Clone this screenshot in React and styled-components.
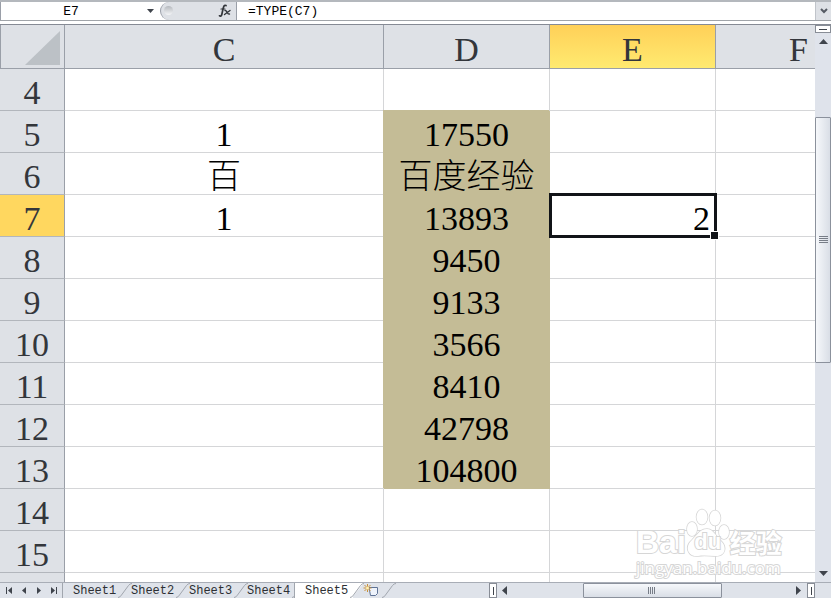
import React from "react";
import styled, { createGlobalStyle, css } from "styled-components";

const line = "#9a9fa8";
const gridLine = "#d5d6d8";
const chrome = "#dee1e6";
const khaki = "#c4bc96";
const cellFont = '"Liberation Serif", "Noto Sans CJK SC", serif';
const uiFont = '"Liberation Mono", "Noto Sans CJK SC", monospace';

const GlobalStyle = createGlobalStyle`
  * { box-sizing: border-box; }
  body { margin: 0; background: #fff; }
  button, input { font: inherit; color: inherit; margin: 0; padding: 0; border: 0; border-radius: 0; background: none; }
  svg { display: block; flex: none; }
`;

const Window = styled.main`
  display: flex;
  flex-direction: column;
  height: 100vh;
  overflow: hidden;
  font-family: ${uiFont};
`;

const FormulaBar = styled.header`
  display: flex;
  flex: none;
  height: 21px;
  border-top: 2px solid #b4b8bd;
  border-bottom: 1px solid #a0a4a9;
  background: #fff;
  font-size: 13px;
`;

const NameBox = styled.div`
  display: flex;
  width: 160px;
  border-left: 1px solid ${line};
`;

const NameInput = styled.input`
  width: 140px;
  min-width: 0;
  text-align: center;
`;

const IconButton = styled.button`
  display: flex;
  flex: none;
  align-items: center;
  justify-content: center;
  width: ${(p) => p.$width}px;
`;

const FunctionArea = styled.div`
  display: flex;
  justify-content: space-between;
  width: 77px;
  border-left: 1px solid ${line};
  border-right: 1px solid ${line};
  border-radius: 9px 0 0 9px;
  background: ${chrome};
`;

const Knob = styled.span`
  width: 9px;
  height: 9px;
  margin: 4px 0 0 3px;
  border-radius: 50%;
  background: linear-gradient(#b5b9be, #f4f5f7);
`;

const FormulaInput = styled.input`
  flex: 1;
  min-width: 0;
  padding-left: 11px;
`;

const ExpandButton = styled(IconButton)`
  border-left: 1px solid #c0c4ca;
  background: ${chrome};
`;

const Body = styled.div`
  display: flex;
  flex: 1;
  min-height: 0;
  margin-top: 3px;
  border-top: 1px solid #858a94;
`;

const SheetArea = styled.section`
  position: relative;
  flex: 1;
  min-width: 0;
  overflow: hidden;
`;

const Grid = styled.table`
  width: 100%;
  min-width: 882px;
  table-layout: fixed;
  border-collapse: separate;
  border-spacing: 0;
  font: 34px/34px ${cellFont};
`;

const Column = styled.col`
  width: ${(p) => (p.$width ? `${p.$width}px` : "auto")};
`;

const ColumnHeader = styled.th`
  height: 44px;
  padding: 6px 0 0;
  border-right: 1px solid ${line};
  border-bottom: 1px solid ${line};
  background: ${(p) => (p.$active ? "linear-gradient(#ffd058, #ffea70)" : chrome)};
  color: #33363b;
  font-weight: 400;
`;

const Corner = styled(ColumnHeader)`
  padding: 0 4px 3px 0;
  border-left: 1px solid ${line};
  vertical-align: bottom;
`;

const CornerButton = styled.button`
  display: block;
  margin-left: auto;
`;

const RowHeader = styled.th`
  height: 42px;
  padding: 7px 0 0;
  border-right: 1px solid ${line};
  border-bottom: 1px solid #b2b6bc;
  background: ${(p) => (p.$active ? "#ffd75f" : chrome)};
  color: #33363b;
  font-weight: 400;
`;

const Cell = styled.td`
  position: relative;
  height: 42px;
  padding: 7px 5px 0;
  border-right: 1px solid ${gridLine};
  border-bottom: 1px solid ${gridLine};
  color: #000;
  font-weight: 300;
  text-align: ${(p) => p.$align || "center"};
  white-space: nowrap;
  ${(p) =>
    p.$filled &&
    css`
      border-color: ${khaki};
      background: ${khaki};
      box-shadow: -1px -1px 0 ${khaki};
    `}
`;

const Selection = styled.span`
  position: absolute;
  inset: -2px -2px -2px -1px;
  z-index: 1;
  border: 3px solid #111418;
  pointer-events: none;

  &::after {
    content: "";
    position: absolute;
    right: -5px;
    bottom: -5px;
    width: 7px;
    height: 7px;
    border: 1px solid #fff;
    background: #111418;
  }
`;

const Watermark = styled.div`
  position: absolute;
  right: 29px;
  bottom: 5px;
  z-index: 2;
  width: 150px;
  color: #fff;
  font-family: "Open Sans", "Noto Sans CJK SC", sans-serif;
  white-space: nowrap;
  -webkit-text-stroke: 2px #d6d6d6;
  paint-order: stroke fill;
  pointer-events: none;
`;

const WatermarkBrand = styled.div`
  display: flex;
  align-items: flex-end;
  height: 51px;
  font: 700 32px/34px "Liberation Sans", sans-serif;
`;

const WatermarkPaw = styled.div`
  position: relative;
  width: 44px;
  height: 51px;
`;

const PawText = styled.span`
  position: absolute;
  inset: 20px 0 0;
  font-size: 22px;
  line-height: 28px;
  text-align: center;
`;

const WatermarkName = styled.span`
  font-family: "Noto Sans CJK SC", sans-serif;
  font-size: 26px;
`;

const WatermarkUrl = styled.div`
  font-size: 17px;
  line-height: 18px;
`;

const VerticalScroll = styled.aside`
  display: flex;
  flex: none;
  flex-direction: column;
  width: 16px;
  background: #dfe3eb;
`;

const SplitHandle = styled.button`
  display: flex;
  align-items: center;
  justify-content: center;
  flex: none;
  width: ${(p) => (p.$vertical ? 8 : 16)}px;
  height: ${(p) => (p.$vertical ? 15 : 8)}px;
  border: 1px solid #888d96;
  background: #fff;
`;

const Track = styled.div`
  display: flex;
  flex: 1;
  min-width: 0;
  min-height: 0;
  flex-direction: ${(p) => (p.$vertical ? "column" : "row")};
`;

const Spacer = styled.div`
  flex: ${(p) => p.$grow} 1 0;
`;

const Thumb = styled.button`
  display: flex;
  align-items: center;
  justify-content: center;
  flex: ${(p) => p.$grow} 1 0;
  border: 1px solid #8b919c;
  border-radius: 1px;
  background: linear-gradient(${(p) => (p.$vertical ? "to right" : "to bottom")}, #f6f8fb, #d9dee6);
`;

const Footer = styled.footer`
  display: flex;
  flex: none;
  height: 16px;
  padding-right: 16px;
  border-top: 1px solid #a8adb6;
  background: #dfe3ea;
  font-size: 12px;
`;

const TabNav = styled.nav`
  display: flex;
  flex: none;
  width: 62px;
  padding: 0 1px;
`;

const Tabs = styled.div`
  display: flex;
  flex: none;
  border-left: 1px solid #a1a6ae;
`;

const Tab = styled.button`
  position: relative;
  width: 58px;
  padding-left: 10px;
  color: #2c2f34;
  line-height: 16px;
  text-align: left;
  white-space: nowrap;
  ${(p) =>
    p.$active &&
    css`
      z-index: 2;
      background: #fff;
      box-shadow: -1px 0 0 #a1a6ae;
    `}
`;

const Slant = styled.svg`
  position: absolute;
  top: 0;
  right: -11px;
`;

const NewTab = styled(Tab)`
  display: flex;
  align-items: center;
  width: 32px;
`;

const HorizontalScroll = styled.div`
  display: flex;
  flex: none;
  width: 40%;
`;

const FooterGap = styled.div`
  flex: 1;
`;

const columns = ["C", "D", "E", "F"];
const widths = [65, 319, 166, 166, null];
const rows = [
  { n: 4 },
  { n: 5, C: "1", D: "17550" },
  { n: 6, C: "百", D: "百度经验" },
  { n: 7, C: "1", D: "13893", E: "2" },
  { n: 8, D: "9450" },
  { n: 9, D: "9133" },
  { n: 10, D: "3566" },
  { n: 11, D: "8410" },
  { n: 12, D: "42798" },
  { n: 13, D: "104800" },
  { n: 14 },
  { n: 15 },
  { n: "" },
];
const sheets = ["Sheet1", "Sheet2", "Sheet3", "Sheet4", "Sheet5"];
const navButtons = [
  ["First sheet", "M1 0h1v7H1zM7 0v7L3 3.5z"],
  ["Previous sheet", "M6 0v7L2 3.5z"],
  ["Next sheet", "M2 0v7l4-3.5z"],
  ["Last sheet", "M1 0v7l4-3.5zM6 0h1v7H6z"],
];

function Glyph({ d, w = 8, h = 7, fill = "#3f444c" }) {
  return (
    <svg width={w} height={h} viewBox={`0 0 ${w} ${h}`} fill={fill} aria-hidden="true">
      <path d={d} />
    </svg>
  );
}

function TabEdge({ fill }) {
  return (
    <Slant width="14" height="15" viewBox="0 0 14 15" aria-hidden="true">
      <path d="M3 0h11L2 14.500H3z" fill={fill} />
      <path d="M14 .5q-2 0-3.500 2L3.500 12Q2 14.500 0 14.500" fill="none" stroke="#a1a6ae" />
    </Slant>
  );
}

export default function App() {
  return (
    <Window>
      <GlobalStyle />
      <FormulaBar>
        <NameBox>
          <NameInput aria-label="Name box" defaultValue="E7" />
          <IconButton $width={19} aria-label="Show names">
            <Glyph d="M0 1h7L3.500 5z" w={7} h={6} />
          </IconButton>
        </NameBox>
        <FunctionArea>
          <Knob />
          <IconButton $width={22} aria-label="Insert function">
            <svg width="14" height="14" viewBox="0 0 14 14" fill="none" stroke="#33363b" strokeLinecap="round" aria-hidden="true">
              <path d="M8 1.500C6 .5 5.500 3 5 5L3.800 10.500C3.500 12 2.500 12.500 1.500 11.800" strokeWidth="1.700" />
              <path d="M3 5h4" strokeWidth="1.200" />
              <path d="M7 6.500c2-.8 2 4.500 4.500 3.500M12 6.500 6.500 10.500" strokeWidth="1.400" />
            </svg>
          </IconButton>
        </FunctionArea>
        <FormulaInput aria-label="Formula" defaultValue="=TYPE(C7)" />
        <ExpandButton $width={16} aria-label="Expand formula bar">
          <svg width="8" height="6" viewBox="0 0 8 6" fill="none" stroke="#555a63" strokeWidth="2" aria-hidden="true">
            <path d="M1 1l3 3 3-3" />
          </svg>
        </ExpandButton>
      </FormulaBar>

      <Body>
        <SheetArea>
          <Grid>
            <colgroup>
              {widths.map((w, i) => (
                <Column key={i} $width={w} />
              ))}
            </colgroup>
            <thead>
              <tr>
                <Corner>
                  <CornerButton aria-label="Select all">
                    <Glyph d="M35 0v34H0z" w={35} h={34} fill="#bcc1c6" />
                  </CornerButton>
                </Corner>
                {columns.map((c) => (
                  <ColumnHeader key={c} scope="col" $active={c === "E"}>
                    {c}
                  </ColumnHeader>
                ))}
              </tr>
            </thead>
            <tbody>
              {rows.map((row) => (
                <tr key={row.n}>
                  <RowHeader scope="row" $active={row.n === 7}>
                    {row.n}
                  </RowHeader>
                  {columns.map((c) => (
                    <Cell key={c} $filled={c === "D" && row.D} $align={c === "E" ? "right" : "center"}>
                      {row[c]}
                      {c === "E" && row.n === 7 && <Selection />}
                    </Cell>
                  ))}
                </tr>
              ))}
            </tbody>
          </Grid>
          <Watermark>
            <WatermarkBrand>
              <span>Bai</span>
              <WatermarkPaw>
                <svg width="44" height="51" viewBox="0 0 44 51" fill="#fff" stroke="#d6d6d6" strokeWidth="1.500" aria-hidden="true">
                  <ellipse cx="6" cy="21" rx="5" ry="7" />
                  <ellipse cx="16" cy="9" rx="5.500" ry="7.500" />
                  <ellipse cx="29" cy="10" rx="5.500" ry="7.500" />
                  <ellipse cx="38" cy="24" rx="5" ry="7" />
                  <path d="M21 21c6 0 8 6 13 11 8 7 5 16-4 16-6 0-12-1-18 0-10 1-14-9-6-16 6-6 8-11 15-11z" />
                </svg>
                <PawText>du</PawText>
              </WatermarkPaw>
              <WatermarkName>经验</WatermarkName>
            </WatermarkBrand>
            <WatermarkUrl>jingyan.baidu.com</WatermarkUrl>
          </Watermark>
        </SheetArea>

        <VerticalScroll aria-label="Vertical scrolling">
          <SplitHandle aria-label="Split rows">
            <Glyph d="M0 0h8v1H0z" w={8} h={1} />
          </SplitHandle>
          <IconButton $width={16} aria-label="Scroll up">
            <Glyph d="M0 11h9L4.500 6z" w={9} h={17} />
          </IconButton>
          <Track $vertical>
            <Spacer $grow={67} />
            <Thumb $vertical $grow={246} aria-label="Scroll rows">
              <Glyph d="M0 0h9v1H0zM0 2h9v1H0zM0 4h9v1H0zM0 6h9v1H0z" w={9} fill="#777d87" />
            </Thumb>
            <Spacer $grow={203} />
          </Track>
          <IconButton $width={16} aria-label="Scroll down">
            <Glyph d="M0 6h9L4.500 11z" w={9} h={17} />
          </IconButton>
        </VerticalScroll>
      </Body>

      <Footer>
        <TabNav aria-label="Sheet navigation">
          {navButtons.map(([label, d]) => (
            <IconButton key={label} $width={15} aria-label={label}>
              <Glyph d={d} />
            </IconButton>
          ))}
        </TabNav>
        <Tabs>
          {sheets.map((name) => (
            <Tab key={name} $active={name === "Sheet5"}>
              {name}
              <TabEdge fill={name === "Sheet5" ? "#fff" : "#dfe3ea"} />
            </Tab>
          ))}
          <NewTab aria-label="Insert sheet">
            <svg width="16" height="14" viewBox="0 0 16 14" fill="none" aria-hidden="true">
              <path d="M6 3.500h8.500v6l-2 2H7.500z" fill="#eef3fb" stroke="#5f7396" />
              <path d="M4.500 0v8M.5 4h8M1.500 1l6 6M7.500 1l-6 6" stroke="#c9903a" />
              <circle cx="4.500" cy="4" r="1.500" fill="#fff2b0" />
            </svg>
            <TabEdge fill="#dfe3ea" />
          </NewTab>
        </Tabs>
        <FooterGap />
        <HorizontalScroll>
          <SplitHandle $vertical aria-label="Resize tabs">
            <Glyph d="M0 0h1v8H0z" w={1} h={8} />
          </SplitHandle>
          <IconButton $width={16} aria-label="Scroll left">
            <Glyph d="M5 0v9L0 4.500z" w={6} h={9} />
          </IconButton>
          <Track>
            <Spacer $grow={70} />
            <Thumb $grow={138} aria-label="Scroll columns">
              <Glyph d="M0 0h1v7H0zM2 0h1v7H2zM4 0h1v7H4zM6 0h1v7H6z" fill="#777d87" />
            </Thumb>
            <Spacer $grow={70} />
          </Track>
          <IconButton $width={16} aria-label="Scroll right">
            <Glyph d="M0 0v9l5-4.500z" w={6} h={9} />
          </IconButton>
          <SplitHandle $vertical aria-label="Split columns">
            <Glyph d="M0 0h1v8H0z" w={1} h={8} />
          </SplitHandle>
        </HorizontalScroll>
      </Footer>
    </Window>
  );
}
